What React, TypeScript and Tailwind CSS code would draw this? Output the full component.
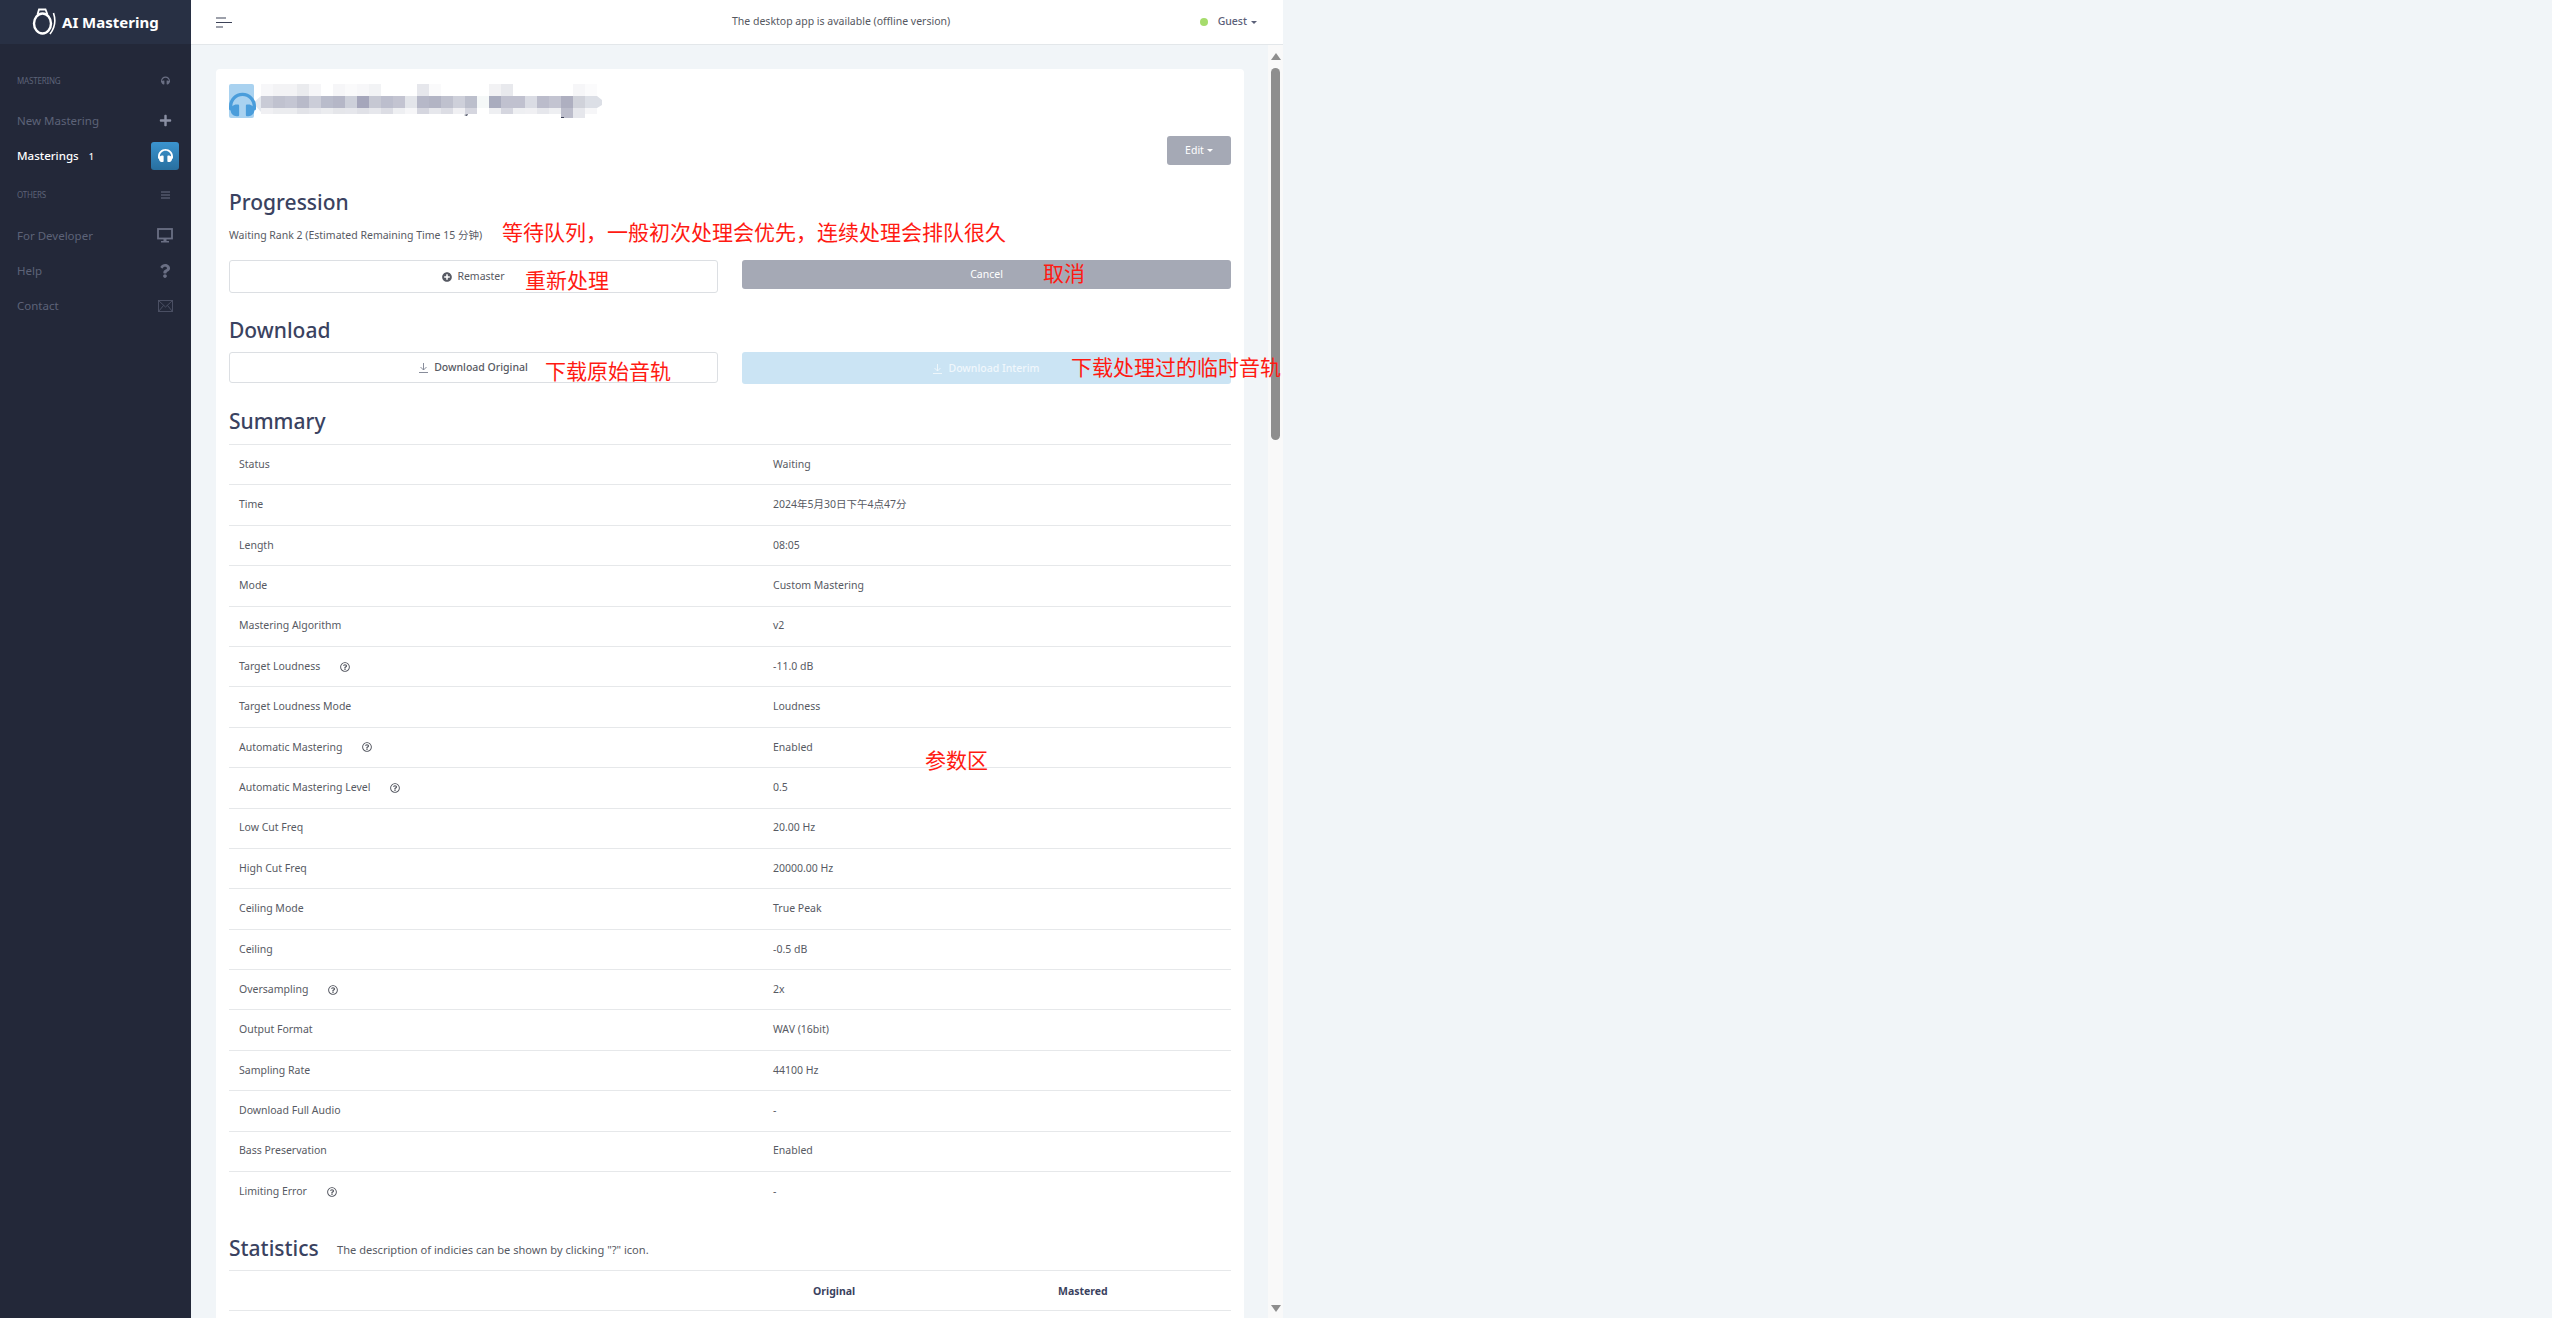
import { FaHeadphones, FaPlus, FaPlusCircle, FaQuestion, FaRegQuestionCircle } from "react-icons/fa"

const summaryRows = [
    { label: "Status", value: "Waiting" },
    { label: "Time", value: "2024年5月30日下午4点47分" },
    { label: "Length", value: "08:05" },
    { label: "Mode", value: "Custom Mastering" },
    { label: "Mastering Algorithm", value: "v2" },
    { label: "Target Loudness", value: "-11.0 dB", hint: true },
    { label: "Target Loudness Mode", value: "Loudness" },
    { label: "Automatic Mastering", value: "Enabled", hint: true },
    { label: "Automatic Mastering Level", value: "0.5", hint: true },
    { label: "Low Cut Freq", value: "20.00 Hz" },
    { label: "High Cut Freq", value: "20000.00 Hz" },
    { label: "Ceiling Mode", value: "True Peak" },
    { label: "Ceiling", value: "-0.5 dB" },
    { label: "Oversampling", value: "2x", hint: true },
    { label: "Output Format", value: "WAV (16bit)" },
    { label: "Sampling Rate", value: "44100 Hz" },
    { label: "Download Full Audio", value: "-" },
    { label: "Bass Preservation", value: "Enabled" },
    { label: "Limiting Error", value: "-", hint: true },
]

// pixelated (censored) track title
const mosaicTop = ["#f7f7f9", "#f3f3f5", "#f3f3f5", "#eaebee", "#f6f6f8", "#ffffff", "#f6f6f8", "#fafafb", "#f7f7f9", "#f2f3f5", "#ffffff", "#ffffff", "#ffffff", "#e6e7ec", "#fafafb", "#ffffff", "#ffffff", "#ffffff", "#ffffff", "#f2f2f4", "#e8e9ed", "#ffffff", "#ffffff", "#ffffff", "#ffffff", "#ffffff", "#f6f6f8", "#fbfbfc"]
const mosaicMid = ["#c9cbd6", "#c0c2cf", "#c4c6d3", "#b8bac9", "#cbcdd8", "#b9bccb", "#b5b7c7", "#cdd0da", "#a5a6bb", "#c6c8d3", "#bcbecd", "#c3c4d1", "#e3e5ea", "#b6b8c8", "#b2b4c4", "#bfc1ce", "#ced0da", "#bcbfcc", "#f5f8f8", "#a9acbe", "#c0c1cf", "#c0c1cf", "#dadce4", "#bbbccb", "#c3c4d1", "#aeafc0", "#d0d2da", "#dcdfe6"]
const mosaicLow = ["#f0f0f3", "#ebecef", "#ebecef", "#e2e3e8", "#e6e7ec", "#ebecef", "#e5e6ea", "#e6e7ec", "#e0e1e7", "#e6e7ec", "#dcdde4", "#eeeff2", "#f6f6f8", "#d5d6df", "#e6e7ec", "#dcdde4", "#f0f0f3", "#d5d6df", "#ffffff", "#eeeff2", "#d5d6df", "#eeeff2", "#f0f0f3", "#e6e7ec", "#eeeff2", "#bcbdcb", "#e6e7ec", "#f6f6f8"]

const BlurredTitle = () => (
    <svg width="350" height="36" viewBox="0 0 350 36" className="-ml-px">
        <polygon points="8,12 0,19 8,28" fill="#e4e8ee" />
        {mosaicTop.map((c, i) => <rect key={i} x={8 + i * 12} y="0" width="12" height="12" fill={c} />)}
        {mosaicMid.map((c, i) => <rect key={i} x={8 + i * 12} y="12" width="12" height="12" fill={c} />)}
        {mosaicLow.map((c, i) => <rect key={i} x={8 + i * 12} y="24" width="12" height={i === 25 || i === 26 ? 10 : 6} fill={c} />)}
        <polygon points="344,12 349,16 349,21 344,24" fill="#dcdfe6" />
        <path d="M211 31 l4 -1 l-1 2 z M308 33 h3 v1 h-3 z" fill="#3d4257" />
    </svg>
)

const Logo = () => (
    <svg width="26" height="28" viewBox="0 0 26 28" fill="none" stroke="#ffffff">
        <ellipse cx="10.5" cy="15.5" rx="8.5" ry="10" strokeWidth="2.4" />
        <path d="M5.5 6.5 L7 1.5 H13.5 L15.5 6.5" strokeWidth="1.8" />
        <path d="M21.5 5 C23.5 11 23.5 19 18 26" strokeWidth="1.6" />
    </svg>
)

const MonitorIcon = () => (
    <svg width="16" height="15" viewBox="0 0 16 15" fill="none">
        <rect x="1" y="1" width="14" height="9.5" stroke="#6a6f84" strokeWidth="1.8" />
        <path d="M6.5 11 H9.5 V13 H12 V14.5 H4 V13 H6.5 Z" fill="#6a6f84" />
    </svg>
)

const MailIcon = () => (
    <svg width="15" height="12" viewBox="0 0 15 12" fill="none" stroke="#4f5468" strokeWidth="0.9">
        <rect x="0.5" y="0.5" width="14" height="11" />
        <path d="M0.5 0.5 L7.5 7 L14.5 0.5 M0.5 11.5 L5.5 5.5 M14.5 11.5 L9.5 5.5" />
    </svg>
)

const ListIcon = () => (
    <svg width="9" height="8" viewBox="0 0 9 8" stroke="#6a6f84" strokeWidth="1">
        <path d="M0 1 H9 M0 4 H9 M0 7 H9" />
    </svg>
)

const DownloadIcon = ({ color }: { color: string }) => (
    <svg width="9" height="10" viewBox="0 0 9 10" fill="none" stroke={color} strokeWidth="0.9">
        <path d="M4.5 0 V7 M1.5 4 L4.5 7 L7.5 4 M0 9.5 H9" />
    </svg>
)

const SectionLabel = ({ label, icon, className }: { label: string; icon: React.ReactNode; className: string }) => (
    <div className={`flex items-center justify-between pl-[17px] pr-[21px] ${className}`}>
        <span className="text-[8px] leading-none text-[#5d6378] tracking-[-0.2px]">{label}</span>
        {icon}
    </div>
)

const NavItem = ({ label, icon, className }: { label: string; icon: React.ReactNode; className: string }) => (
    <div className={`flex h-[35px] items-center justify-between pl-[17px] pr-[12px] ${className}`}>
        <span className="text-[11.5px] text-[#5d6378]">{label}</span>
        <span className="flex w-[28px] justify-center">{icon}</span>
    </div>
)

const Heading = ({ children, className }: { children: React.ReactNode; className: string }) => (
    <h2 className={`h-[30px] text-[21px] leading-[30px] font-medium text-[#3a4260] ${className}`}>{children}</h2>
)

const App = () => {
    return (
        <div className="flex h-screen w-full overflow-hidden bg-[#f1f5f8] font-['Noto_Sans','Noto_Sans_CJK_SC',sans-serif]">
            <div className="relative flex h-[1318px] w-[1283px] shrink-0">
                <aside className="w-[191px] shrink-0 bg-[#232839]">
                    <div className="flex h-[44px] items-center bg-[#283044] pl-[32px]">
                        <Logo />
                        <span className="ml-[4px] mt-[1px] text-[15px] font-bold text-white">AI Mastering</span>
                    </div>
                    <SectionLabel label="MASTERING" className="mt-[32px]" icon={<FaHeadphones size={9} color="#6a6f84" />} />
                    <NavItem label="New Mastering" className="mt-[18px]" icon={<FaPlus size={13} color="#8a8fa3" />} />
                    <div className="flex h-[35px] items-center justify-between pl-[17px] pr-[12px]">
                        <span className="text-[11.5px] font-medium text-white">Masterings<span className="ml-[10px] text-[9px]">1</span></span>
                        <span className="flex h-[28px] w-[28px] items-center justify-center rounded-[3px] bg-gradient-to-b from-[#3b94cf] to-[#286f9f]">
                            <FaHeadphones size={15} color="#ffffff" />
                        </span>
                    </div>
                    <SectionLabel label="OTHERS" className="mt-[18px]" icon={<ListIcon />} />
                    <NavItem label="For Developer" className="mt-[19px]" icon={<MonitorIcon />} />
                    <NavItem label="Help" className="" icon={<FaQuestion size={14} color="#6a6f84" />} />
                    <NavItem label="Contact" className="" icon={<MailIcon />} />
                </aside>

                <div className="flex min-w-0 flex-1 flex-col">
                    <header className="flex h-[45px] shrink-0 items-center border-b border-[#e3e7ea] bg-white pl-[25px] pr-[26px]">
                        <svg width="16" height="11" viewBox="0 0 16 11" stroke="#3c4257" strokeWidth="1.2">
                            <path d="M0 1 H10 M0 5.5 H16 M0 10 H7" />
                        </svg>
                        <span className="ml-[500px] text-[10.5px] text-[#55585f]">The desktop app is available (offline version)</span>
                        <span className="ml-auto flex items-center text-[10.5px] font-medium text-[#5b6078]">
                            <span className="mr-[10px] h-[8px] w-[8px] rounded-full bg-[#a6dc6c]" />
                            Guest
                            <span className="ml-[4px] border-x-[3px] border-t-[3px] border-x-transparent border-t-[#5b6078]" />
                        </span>
                    </header>

                    <div className="flex min-h-0 flex-1">
                        <main className="min-w-0 flex-1 overflow-hidden pl-[25px] pr-[24px] pt-[24px]">
                            <div className="rounded-[4px] bg-white px-[13px] pt-[15px] pb-[20px] text-[10.5px] text-[#575a63]">
                                <div className="flex h-[36px] items-start">
                                    <div className="relative h-[34px] w-[25px] rounded-[2px] bg-[#a9d2f0]">
                                        <FaHeadphones size={27} color="#4a9ddb" className="absolute left-0 top-[7px]" />
                                    </div>
                                    <BlurredTitle />
                                </div>
                                <div className="mt-[16px] flex justify-end">
                                    <button className="flex h-[29px] w-[64px] items-center justify-center rounded-[3px] bg-[#a5a9b5] text-white">
                                        Edit
                                        <span className="ml-[3px] border-x-[3px] border-t-[3px] border-x-transparent border-t-white" />
                                    </button>
                                </div>

                                <Heading className="mt-[22px]">Progression</Heading>
                                <p className="mt-[10px] h-[16px] leading-[16px]">Waiting Rank 2 (Estimated Remaining Time 15 分钟)</p>
                                <div className="mt-[17px] grid grid-cols-2 items-start gap-x-[24px]">
                                    <button className="flex h-[33px] items-center justify-center gap-[5px] rounded-[3px] border border-[#dcdfe3] bg-white pt-px">
                                        <FaPlusCircle size={10} color="#575a63" />
                                        Remaster
                                    </button>
                                    <button className="h-[29px] rounded-[3px] bg-[#a5a9b5] pt-px text-white">Cancel</button>
                                </div>

                                <Heading className="mt-[22px]">Download</Heading>
                                <div className="mt-[7px] grid grid-cols-2 items-start gap-x-[24px]">
                                    <button className="flex h-[31px] items-center justify-center gap-[6px] rounded-[3px] border border-[#dcdfe3] bg-white pt-px font-medium">
                                        <DownloadIcon color="#7b8090" />
                                        Download Original
                                    </button>
                                    <button className="flex h-[32px] items-center justify-center gap-[6px] rounded-[3px] bg-[#cbe4f4] pt-px font-medium text-[#f0f7fc]">
                                        <DownloadIcon color="#f0f7fc" />
                                        Download Interim
                                    </button>
                                </div>

                                <Heading className="mt-[22px]">Summary</Heading>
                                <div className="mt-[8px]">
                                    {summaryRows.map((row) => (
                                        <div key={row.label} className="grid h-[40.4px] grid-cols-[534px_1fr] items-center border-t border-[#e6e8ea]">
                                            <div className="flex items-center pl-[10px]">
                                                {row.label}
                                                {row.hint && <FaRegQuestionCircle size={10} color="#575a63" className="ml-[20px]" />}
                                            </div>
                                            <div className="pl-[10px]">{row.value}</div>
                                        </div>
                                    ))}
                                </div>

                                <div className="mt-[22px] flex h-[30px] items-center">
                                    <h2 className="w-[108px] text-[21px] font-medium text-[#3a4260]">Statistics</h2>
                                    <span className="mt-[4px] text-[11.1px]">The description of indicies can be shown by clicking "?" icon.</span>
                                </div>
                                <div className="mt-[7px] grid h-[41px] grid-cols-[584px_245px_1fr] items-center border-y border-[#e6e8ea] pt-px font-bold text-[#3a4260]">
                                    <span />
                                    <span>Original</span>
                                    <span>Mastered</span>
                                </div>
                            </div>
                        </main>

                        <div className="flex w-[15px] shrink-0 flex-col items-center bg-[#f9f9f9] pt-[8px]">
                            <span className="border-x-[5px] border-b-[7px] border-x-transparent border-b-[#8e8e8e]" />
                            <span className="mt-[8px] h-[372px] w-[9px] rounded-full bg-[#8e8e8e]" />
                            <span className="mt-auto mb-[6px] border-x-[5px] border-t-[7px] border-x-transparent border-t-[#8e8e8e]" />
                        </div>
                    </div>
                </div>

                {/* red notes written over the screenshot */}
                <span className="absolute left-[502px] top-[217px] text-[21px] leading-[30px] text-[#ff1a12]">等待队列，一般初次处理会优先，连续处理会排队很久</span>
                <span className="absolute left-[525px] top-[265px] text-[21px] leading-[30px] text-[#ff1a12]">重新处理</span>
                <span className="absolute left-[1043px] top-[258px] text-[21px] leading-[30px] text-[#ff1a12]">取消</span>
                <span className="absolute left-[545px] top-[356px] text-[21px] leading-[30px] text-[#ff1a12]">下载原始音轨</span>
                <span className="absolute left-[1071px] top-[352px] text-[21px] leading-[30px] text-[#ff1a12]">下载处理过的临时音轨</span>
                <span className="absolute left-[925px] top-[745px] text-[21px] leading-[30px] text-[#ff1a12]">参数区</span>
            </div>
        </div>
    )
}

export default App
